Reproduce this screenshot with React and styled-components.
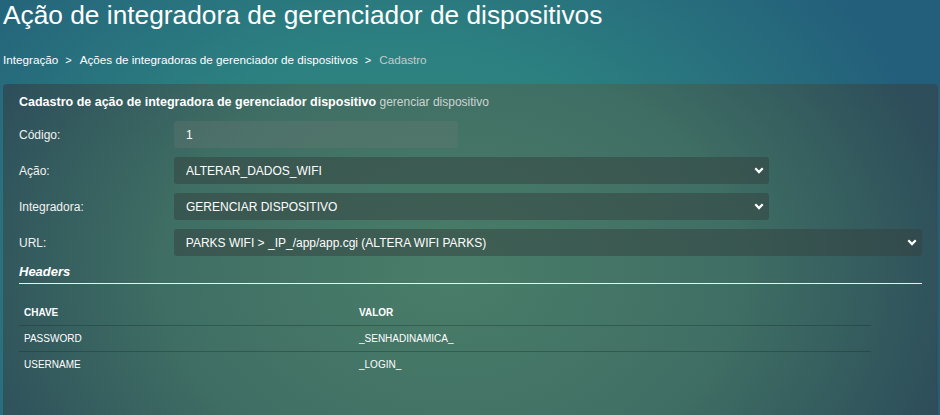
import styled, { createGlobalStyle } from "styled-components";

const GlobalStyle = createGlobalStyle`
  html, body {
    margin: 0;
    padding: 0;
    overflow: hidden;
  }
  body {
    min-height: 100vh;
    font-family: "Liberation Sans", Arial, sans-serif;
    color: #fff;
    background: radial-gradient(ellipse 60% 110% at 42% 65%, #368b7c 0%, #2c8080 50%, #235e7a 100%);
  }
`;

const Page = styled.div`
  padding: 0 2px 0 3px;
`;

const Title = styled.h1`
  margin: 0;
  font-size: 26.3px;
  line-height: 30px;
  font-weight: normal;
`;

const Breadcrumb = styled.nav`
  margin-top: 22px;
  display: flex;
  font-size: 11.7px;
  line-height: 16px;
`;

const Crumb = styled.span`
  color: ${(p) => (p.$active ? "#c3cccc" : "#fff")};
`;

const Sep = styled.span`
  margin: 0 8px 0 7px;
  font-size: 11px;
`;

const Card = styled.section`
  margin-top: 16px;
  width: 903px;
  padding: 9px 16px 50px 16px;
  border-radius: 4px;
  background: radial-gradient(ellipse 55% 110% at 48% 55%, #4a7d69 0%, #3f6f64 55%, #2d4e5a 100%);
`;

const CardTitle = styled.h2`
  margin: 0 0 10px;
  font-size: 12.5px;
  line-height: 18px;
  font-weight: bold;

  small {
    font-size: 12px;
    font-weight: normal;
    color: #ccd4d2;
  }
`;

const Form = styled.div`
  display: flex;
  flex-direction: column;
  gap: 9px;
`;

const Row = styled.div`
  display: flex;
  align-items: center;
`;

const Label = styled.label`
  width: 155px;
  font-size: 12px;
  color: #f2f2f2;
`;

const Input = styled.input`
  box-sizing: border-box;
  width: 284px;
  height: 27px;
  padding: 0 12px;
  border: none;
  border-radius: 3px;
  background: rgba(120, 125, 125, 0.26);
  color: #fff;
  font: 12px "Liberation Sans", Arial, sans-serif;
  outline: none;
`;

const SelectBox = styled.div`
  position: relative;
  width: ${(p) => p.$width}px;

  svg {
    position: absolute;
    right: 5px;
    top: 10px;
    pointer-events: none;
  }
`;

const Select = styled.select`
  box-sizing: border-box;
  width: 100%;
  height: 27px;
  padding: 0 12px;
  border: none;
  border-radius: 3px;
  appearance: none;
  background: rgba(52, 64, 62, 0.5);
  color: #fff;
  font: 12px "Liberation Sans", Arial, sans-serif;
  outline: none;
`;

const SectionTitle = styled.h3`
  margin: 8px 0 0;
  padding-bottom: 3px;
  border-bottom: 1px solid rgba(255, 255, 255, 0.9);
  font-size: 13px;
  line-height: 16px;
  font-weight: bold;
  font-style: italic;
`;

const Table = styled.table`
  margin-top: 16px;
  width: 852px;
  border-collapse: collapse;
  font-size: 10px;
  line-height: 14px;

  th, td {
    padding: 6px 5px 5px;
    text-align: left;
    border-bottom: 1px solid rgba(20, 45, 40, 0.35);
  }
  th {
    font-weight: bold;
  }
  th:first-child, td:first-child {
    width: 325px;
  }
  tr:last-child td {
    border-bottom: none;
  }
`;

const Chevron = () => (
  <svg width="10" height="7" viewBox="0 0 10 7">
    <polyline points="1.3,1.3 5,5 8.7,1.3" fill="none" stroke="#fff" strokeWidth="2.3" />
  </svg>
);

const Dropdown = ({ width, value }) => (
  <SelectBox $width={width}>
    <Select defaultValue={value}>
      <option value={value}>{value}</option>
    </Select>
    <Chevron />
  </SelectBox>
);

const headers = [
  { chave: "PASSWORD", valor: "_SENHADINAMICA_" },
  { chave: "USERNAME", valor: "_LOGIN_" },
];

export default function App() {
  return (
    <>
      <GlobalStyle />
      <Page>
        <Title>Ação de integradora de gerenciador de dispositivos</Title>
        <Breadcrumb>
          <Crumb>Integração</Crumb>
          <Sep>&gt;</Sep>
          <Crumb>Ações de integradoras de gerenciador de dispositivos</Crumb>
          <Sep>&gt;</Sep>
          <Crumb $active>Cadastro</Crumb>
        </Breadcrumb>
        <Card>
          <CardTitle>
            Cadastro de ação de integradora de gerenciador dispositivo <small>gerenciar dispositivo</small>
          </CardTitle>
          <Form>
            <Row>
              <Label>Código:</Label>
              <Input defaultValue="1" readOnly />
            </Row>
            <Row>
              <Label>Ação:</Label>
              <Dropdown width={595} value="ALTERAR_DADOS_WIFI" />
            </Row>
            <Row>
              <Label>Integradora:</Label>
              <Dropdown width={595} value="GERENCIAR DISPOSITIVO" />
            </Row>
            <Row>
              <Label>URL:</Label>
              <Dropdown width={749} value="PARKS WIFI > _IP_/app/app.cgi (ALTERA WIFI PARKS)" />
            </Row>
          </Form>
          <SectionTitle>Headers</SectionTitle>
          <Table>
            <thead>
              <tr>
                <th>CHAVE</th>
                <th>VALOR</th>
              </tr>
            </thead>
            <tbody>
              {headers.map((h) => (
                <tr key={h.chave}>
                  <td>{h.chave}</td>
                  <td>{h.valor}</td>
                </tr>
              ))}
            </tbody>
          </Table>
        </Card>
      </Page>
    </>
  );
}
